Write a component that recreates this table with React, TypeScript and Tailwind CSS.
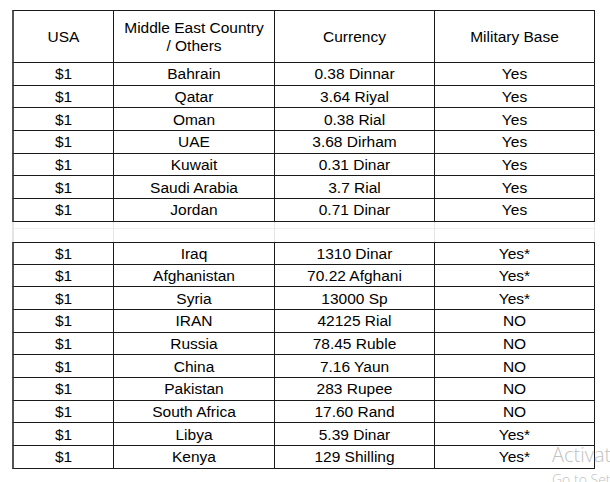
import React from "react";

const group1 = [
  ["$1", "Bahrain", "0.38 Dinnar", "Yes"],
  ["$1", "Qatar", "3.64 Riyal", "Yes"],
  ["$1", "Oman", "0.38 Rial", "Yes"],
  ["$1", "UAE", "3.68 Dirham", "Yes"],
  ["$1", "Kuwait", "0.31 Dinar", "Yes"],
  ["$1", "Saudi Arabia", "3.7 Rial", "Yes"],
  ["$1", "Jordan", "0.71 Dinar", "Yes"],
];

const group2 = [
  ["$1", "Iraq", "1310 Dinar", "Yes*"],
  ["$1", "Afghanistan", "70.22 Afghani", "Yes*"],
  ["$1", "Syria", "13000 Sp", "Yes*"],
  ["$1", "IRAN", "42125 Rial", "NO"],
  ["$1", "Russia", "78.45 Ruble", "NO"],
  ["$1", "China", "7.16 Yaun", "NO"],
  ["$1", "Pakistan", "283 Rupee", "NO"],
  ["$1", "South Africa", "17.60 Rand", "NO"],
  ["$1", "Libya", "5.39 Dinar", "Yes*"],
  ["$1", "Kenya", "129 Shilling", "Yes*"],
];

function Row({ cells, top }: { cells: string[]; top?: boolean }) {
  return (
    <div
      className={
        "grid grid-cols-[100px_161px_160px_160px] h-[22.7px] border-l-2 border-l-[#555] border-b border-b-[#1a1a1a] " +
        (top ? "border-t border-t-[#1a1a1a]" : "")
      }
    >
      {cells.map((c, i) => (
        <div
          key={i}
          className="flex items-center justify-center border-r border-r-[#1a1a1a] pt-[1px]"
        >
          {c}
        </div>
      ))}
    </div>
  );
}

export default function App() {
  return (
    <div
      className="relative w-[610px] h-[482px] overflow-hidden bg-white text-black"
      style={{ fontFamily: '"Liberation Sans", Arial, sans-serif' }}
    >
      <div className="pl-[12px] pt-[10px] text-[15.5px] leading-[18px]">
        <div className="w-[583px]">
          <div className="grid grid-cols-[100px_161px_160px_160px] h-[53px] border-t border-t-[#1a1a1a] border-l-2 border-l-[#555] border-b border-b-[#1a1a1a]">
            <div className="flex items-center justify-center border-r border-r-[#1a1a1a]">USA</div>
            <div className="flex items-center justify-center border-r border-r-[#1a1a1a] text-center">
              Middle East Country
              <br />/ Others
            </div>
            <div className="flex items-center justify-center border-r border-r-[#1a1a1a]">Currency</div>
            <div className="flex items-center justify-center border-r border-r-[#1a1a1a]">Military Base</div>
          </div>
          {group1.map((r, i) => (
            <Row key={"a" + i} cells={r} />
          ))}
          <div className="grid grid-cols-[100px_161px_160px_160px] h-[20px] border-l-2 border-l-[#e4e4e4]">
            {[0, 1, 2, 3].map((i) => (
              <div key={i} className="flex flex-col border-r border-r-[#e4e4e4]">
                <div className="h-[7px] border-b border-b-[#efefef]" />
              </div>
            ))}
          </div>
          {group2.map((r, i) => (
            <Row key={"b" + i} cells={r} top={i === 0} />
          ))}
        </div>
      </div>
      <div
        className="absolute left-[552px] top-[443px] whitespace-nowrap text-[#c2c2c2]"
        style={{ fontFamily: '"Open Sans", "Noto Sans", sans-serif' }}
      >
        <div className="text-[20px] leading-[24px] font-light">Activate Windows</div>
        <div className="text-[14px] leading-[18px] mt-[4px] font-light">Go to Settings to activate Windows.</div>
      </div>
    </div>
  );
}
